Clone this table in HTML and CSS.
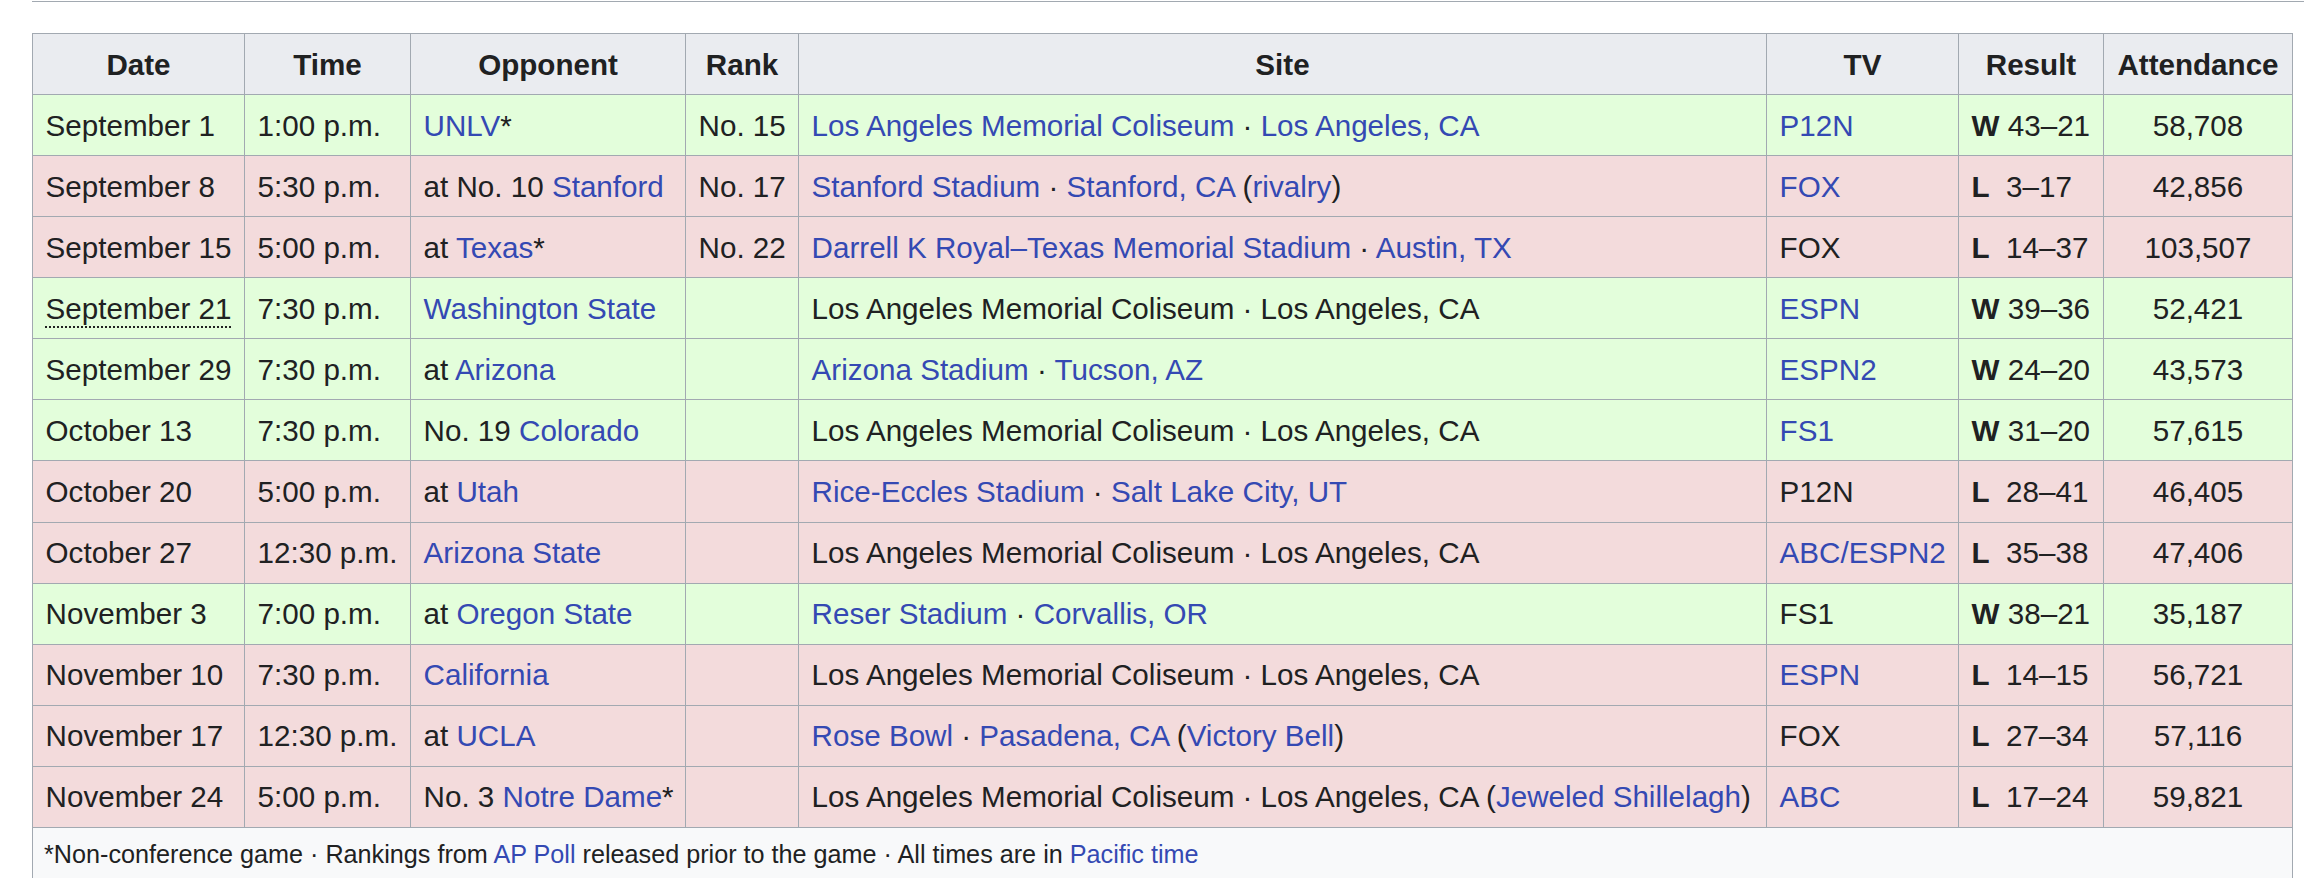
FILE: index.html
```html
<!DOCTYPE html>
<html lang="en">
<head>
<meta charset="utf-8">
<title>Schedule</title>
<link rel="stylesheet" href="styles.css">
</head>
<body>
<div class="page">
  <div class="rule"></div>
  <table class="wikitable">
    <colgroup>
      <col class="c-date"><col class="c-time"><col class="c-opp"><col class="c-rank"><col class="c-site"><col class="c-tv"><col class="c-res"><col class="c-att">
    </colgroup>
    <thead>
      <tr><th>Date</th><th>Time</th><th>Opponent</th><th>Rank</th><th>Site</th><th>TV</th><th>Result</th><th>Attendance</th></tr>
    </thead>
    <tbody>
      <tr class="win"><td>September 1</td><td>1:00 p.m.</td><td><a href="#">UNLV</a>*</td><td>No. 15</td><td><a href="#">Los Angeles Memorial Coliseum</a> · <a href="#">Los Angeles, CA</a></td><td><a href="#">P12N</a></td><td><b>W</b> 43–21</td><td class="ctr">58,708</td></tr>
      <tr class="loss"><td>September 8</td><td>5:30 p.m.</td><td>at No. 10 <a href="#">Stanford</a></td><td>No. 17</td><td><a href="#">Stanford Stadium</a> · <a href="#">Stanford, CA</a> (<a href="#">rivalry</a>)</td><td><a href="#">FOX</a></td><td><b>L</b>&nbsp; 3–17</td><td class="ctr">42,856</td></tr>
      <tr class="loss"><td>September 15</td><td>5:00 p.m.</td><td>at <a href="#">Texas</a>*</td><td>No. 22</td><td><a href="#">Darrell K Royal–Texas Memorial Stadium</a> · <a href="#">Austin, TX</a></td><td>FOX</td><td><b>L</b>&nbsp; 14–37</td><td class="ctr">103,507</td></tr>
      <tr class="win"><td><span class="abbr">September 21</span></td><td>7:30 p.m.</td><td><a href="#">Washington State</a></td><td></td><td>Los Angeles Memorial Coliseum · Los Angeles, CA</td><td><a href="#">ESPN</a></td><td><b>W</b> 39–36</td><td class="ctr">52,421</td></tr>
      <tr class="win"><td>September 29</td><td>7:30 p.m.</td><td>at <a href="#">Arizona</a></td><td></td><td><a href="#">Arizona Stadium</a> · <a href="#">Tucson, AZ</a></td><td><a href="#">ESPN2</a></td><td><b>W</b> 24–20</td><td class="ctr">43,573</td></tr>
      <tr class="win"><td>October 13</td><td>7:30 p.m.</td><td>No. 19 <a href="#">Colorado</a></td><td></td><td>Los Angeles Memorial Coliseum · Los Angeles, CA</td><td><a href="#">FS1</a></td><td><b>W</b> 31–20</td><td class="ctr">57,615</td></tr>
      <tr class="loss"><td>October 20</td><td>5:00 p.m.</td><td>at <a href="#">Utah</a></td><td></td><td><a href="#">Rice-Eccles Stadium</a> · <a href="#">Salt Lake City, UT</a></td><td>P12N</td><td><b>L</b>&nbsp; 28–41</td><td class="ctr">46,405</td></tr>
      <tr class="loss"><td>October 27</td><td>12:30 p.m.</td><td><a href="#">Arizona State</a></td><td></td><td>Los Angeles Memorial Coliseum · Los Angeles, CA</td><td><a href="#">ABC/ESPN2</a></td><td><b>L</b>&nbsp; 35–38</td><td class="ctr">47,406</td></tr>
      <tr class="win"><td>November 3</td><td>7:00 p.m.</td><td>at <a href="#">Oregon State</a></td><td></td><td><a href="#">Reser Stadium</a> · <a href="#">Corvallis, OR</a></td><td>FS1</td><td><b>W</b> 38–21</td><td class="ctr">35,187</td></tr>
      <tr class="loss"><td>November 10</td><td>7:30 p.m.</td><td><a href="#">California</a></td><td></td><td>Los Angeles Memorial Coliseum · Los Angeles, CA</td><td><a href="#">ESPN</a></td><td><b>L</b>&nbsp; 14–15</td><td class="ctr">56,721</td></tr>
      <tr class="loss"><td>November 17</td><td>12:30 p.m.</td><td>at <a href="#">UCLA</a></td><td></td><td><a href="#">Rose Bowl</a> · <a href="#">Pasadena, CA</a> (<a href="#">Victory Bell</a>)</td><td>FOX</td><td><b>L</b>&nbsp; 27–34</td><td class="ctr">57,116</td></tr>
      <tr class="loss"><td>November 24</td><td>5:00 p.m.</td><td>No. 3 <a href="#">Notre Dame</a>*</td><td></td><td>Los Angeles Memorial Coliseum · Los Angeles, CA (<a href="#">Jeweled Shillelagh</a>)</td><td><a href="#">ABC</a></td><td><b>L</b>&nbsp; 17–24</td><td class="ctr">59,821</td></tr>
    </tbody>
    <tfoot>
      <tr><td class="note" colspan="8">*Non-conference game · Rankings from <a href="#">AP Poll</a> released prior to the game · All times are in <a href="#">Pacific time</a></td></tr>
    </tfoot>
  </table>
</div>
</body>
</html>
```
FILE: styles.css
```css
html, body {
  margin: 0;
  padding: 0;
  background: #ffffff;
}
body {
  font-family: "Liberation Sans", Arial, sans-serif;
  color: #202122;
}
.page {
  padding: 1px 0 0 32px;
}
.rule {
  border-top: 1px solid #a2a9b1;
  height: 0;
}
.wikitable {
  margin-top: 31px;
  width: 2260px;
  table-layout: fixed;
  border-collapse: collapse;
  border: 1px solid #a2a9b1;
  background: #f8f9fa;
  font-size: 29.6px;
  line-height: 47px;
  color: #202122;
}
.c-date { width: 212px; }
.c-time { width: 166px; }
.c-opp { width: 275px; }
.c-rank { width: 113px; }
.c-site { width: 968px; }
.c-tv { width: 192px; }
.c-res { width: 145px; }
.c-att { width: 189px; }
.wikitable th,
.wikitable td {
  border: 1px solid #a2a9b1;
  padding: 6.54px 12.6px;
  white-space: nowrap;
  text-align: left;
  vertical-align: middle;
}
.wikitable th {
  background: #eaecf0;
  font-weight: bold;
  text-align: center;
}
.wikitable .ctr {
  text-align: center;
}
.win td {
  background: #e3fedb;
}
.loss td {
  background: #f3dbdc;
}
.wikitable a {
  color: #3449b3;
  text-decoration: none;
}
.abbr {
  text-decoration: underline dotted #202122;
  text-decoration-thickness: 1.5px;
  text-underline-offset: 8px;
}
.wikitable td.note {
  background: #f8f9fa;
  font-size: 25.2px;
  line-height: 40px;
  padding: 6px 11px;
}
```
